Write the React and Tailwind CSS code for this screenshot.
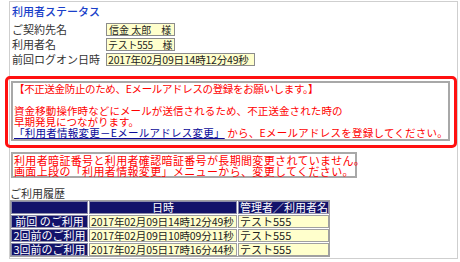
export default function App() {
  const cellNavy = "bg-[#12126a] text-white border border-[#8a8aa8] flex items-center";
  const cellData = "bg-[#ffffcc] text-[#222] border border-[#a0a0a0] flex items-center pl-[1px]";
  return (
    <div className="w-[460px] h-[262px] bg-white overflow-hidden font-['Noto_Sans_CJK_JP','Noto_Sans',sans-serif] text-[11px] leading-[11px]">
      <div className="pt-[1px] pl-[9px]">
        <div className="w-[449px] h-[258px] border border-[#cfcfcf] flex flex-col">
          <div className="pl-[2px] pt-[2px] h-[16px] text-[11px] leading-[14px] text-[#1a3fc9] font-medium">利用者ステータス</div>

          <div className="mt-[5px] flex flex-col gap-[2px] text-[#333]">
            <div className="flex h-[13px] items-center">
              <div className="w-[96px] pl-[2px] text-[11px] whitespace-nowrap">ご契約先名</div>
              <div className="h-[13px] w-[69px] border border-[#8c8c8c] bg-[#ffffcc] px-[2px] flex items-center text-[#222] text-[10px] leading-[10px] whitespace-nowrap overflow-hidden">信金 太郎　様</div>
            </div>
            <div className="flex h-[13px] items-center">
              <div className="w-[96px] pl-[2px] text-[11px] whitespace-nowrap">利用者名</div>
              <div className="h-[13px] w-[69px] border border-[#8c8c8c] bg-[#ffffcc] px-[1px] flex items-center text-[#222] text-[10px] leading-[10px] tracking-[-0.3px] whitespace-nowrap overflow-hidden">テスト555　様</div>
            </div>
            <div className="flex h-[13px] items-center">
              <div className="w-[96px] pl-[2px] text-[11px] whitespace-nowrap">前回ログオン日時</div>
              <div className="h-[13px] w-[149px] border border-[#8c8c8c] bg-[#ffffcc] px-[1px] flex items-center text-[#222] text-[10.5px] leading-[10px] tracking-[-0.2px] whitespace-nowrap overflow-hidden">2017年02月09日14時12分49秒</div>
            </div>
          </div>

          <div className="mt-[10px] -ml-[5px] w-[452px] h-[72px] border-[3px] border-[#ff1010] rounded-[5px] pt-[2px] pl-[3px]">
            <div className="w-[439px] h-[60px] border-[2px] border-[#a8a8a8] pl-[1px] text-[#ff0000] text-[10.5px] leading-[11px] whitespace-nowrap">
              <div className="tracking-[-0.35px]">【不正送金防止のため、Eメールアドレスの登録をお願いします。】</div>
              <div className="h-[11px]"></div>
              <div className="tracking-[0.1px]">資金移動操作時などにメールが送信されるため、不正送金された時の</div>
              <div>早期発見につながります。</div>
              <div className="tracking-[0.25px]">
                <span className="text-[#0a0a99] underline">「利用者情報変更－Eメールアドレス変更」</span> から、Eメールアドレスを登録してください。
              </div>
            </div>
          </div>

          <div className="mt-[4px] ml-[1px] w-[346px] h-[26px] border-[2px] border-[#a8a8a8] pl-[1px] pt-[1px] text-[#ff0000] text-[11px] leading-[11px] whitespace-nowrap tracking-[0.35px]">
            <div>利用者暗証番号と利用者確認暗証番号が長期間変更されていません。</div>
            <div>画面上段の「利用者情報変更」メニューから、変更してください。</div>
          </div>

          <div className="mt-[9px] h-[12px] leading-[12px] text-[#333]">ご利用履歴</div>

          <div className="mt-[1px] w-[320px] border border-[#a0a0a0] grid grid-cols-[77px_148px_91px] auto-rows-[13px] gap-[1px] bg-white text-[11px] leading-[11px] whitespace-nowrap">
            <div className={cellNavy}></div>
            <div className={cellNavy + " justify-center"}>日時</div>
            <div className={cellNavy + " pl-[1px]"}>管理者／利用者名</div>

            <div className={cellNavy + " justify-center"}>前回 のご利用</div>
            <div className={cellData + " text-[10.5px] tracking-[-0.1px]"}>2017年02月09日14時12分49秒</div>
            <div className={cellData}>テスト555</div>

            <div className={cellNavy + " justify-center"}>2回前のご利用</div>
            <div className={cellData + " text-[10.5px] tracking-[-0.1px]"}>2017年02月09日10時09分11秒</div>
            <div className={cellData}>テスト555</div>

            <div className={cellNavy + " justify-center"}>3回前のご利用</div>
            <div className={cellData + " text-[10.5px] tracking-[-0.1px]"}>2017年02月05日17時16分44秒</div>
            <div className={cellData}>テスト555</div>
          </div>
        </div>
      </div>
    </div>
  );
}
